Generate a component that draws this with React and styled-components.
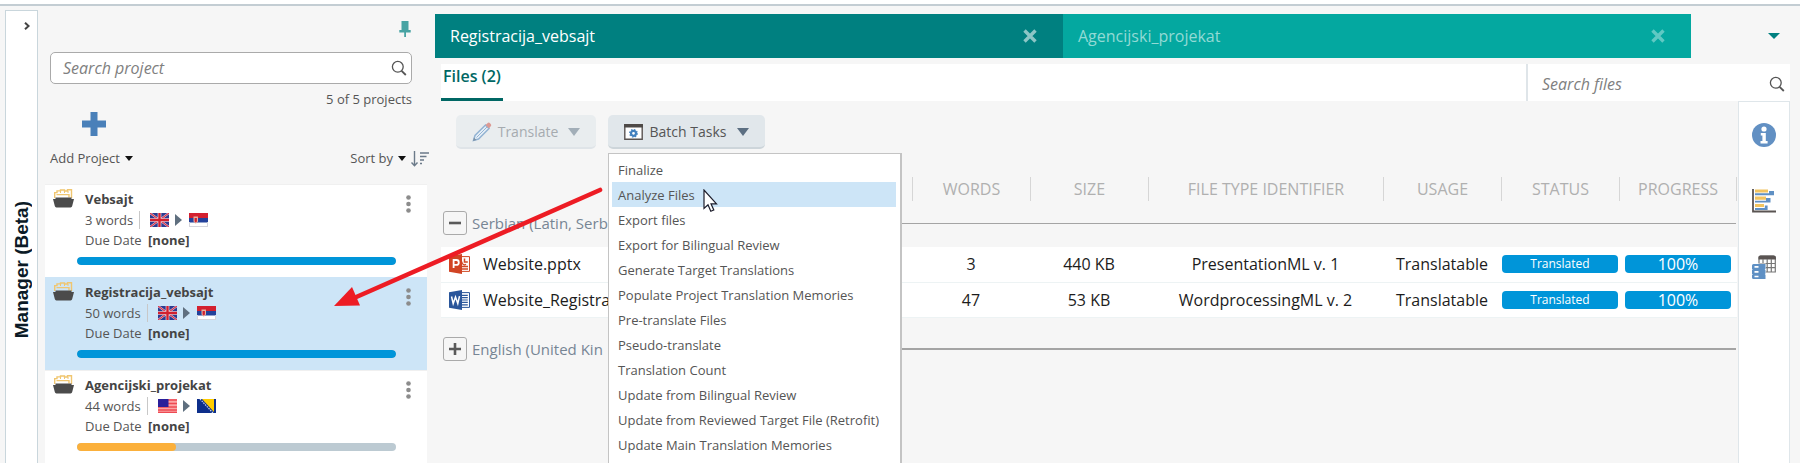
import React from "react";
import styled, { createGlobalStyle } from "styled-components";

const GlobalStyle = createGlobalStyle`
  *, *::before, *::after { box-sizing: border-box; }
  body { margin: 0; background: #f6f6f6; }
  body, button, input { font-family: "Open Sans", "Noto Sans", sans-serif; }
  button { margin: 0; padding: 0; border: 0; background: none; color: inherit; cursor: pointer; }
  svg { display: block; flex: none; }
`;

const Page = styled.div`
  position: relative;
  display: flex;
  flex-direction: column;
  min-height: 100vh;
  overflow: hidden;
  color: #555;
`;
const TopStrip = styled.div`
  height: 6px;
  background: #fff;
  border-bottom: 2px solid #c3cdd3;
`;
const Workspace = styled.div`
  flex: 1;
  display: flex;
`;

/* Collapsed side rail */
const SideRail = styled.aside`
  width: 33px;
  flex: none;
  margin: 4px 6px 0 5px;
  background: #fff;
  border: 1px solid #c9d6dc;
  border-bottom: 0;
`;
const ExpandButton = styled.button`
  display: flex;
  justify-content: flex-end;
  width: 100%;
  padding: 11px 7px 11px 0;
`;
const RailLabel = styled.div`
  margin: 160px auto 0;
  writing-mode: vertical-rl;
  transform: rotate(180deg);
  font: bold 19px/31px "Liberation Sans", sans-serif;
  color: #0b1a26;
`;

/* Projects panel */
const ProjectsPanel = styled.section`
  width: 385px;
  flex: none;
  display: flex;
  flex-direction: column;
  padding-left: 1px;
`;
const PanelTop = styled.div`
  display: flex;
  flex-direction: column;
  height: 178px;
  padding: 14px 0 0 5px;
`;
const PinButton = styled.button`
  align-self: flex-end;
  margin-right: 18px;
`;
const SearchBox = styled.label`
  display: flex;
  align-items: center;
  height: 32px;
  margin: 14px 17px 0 0;
  padding: 0 4px 0 12px;
  background: #fff;
  border: 1px solid #aaa;
  border-radius: 5px;
`;
const SearchInput = styled.input`
  flex: 1;
  min-width: 0;
  padding: 0;
  border: 0;
  outline: 0;
  background: none;
  font-size: 16px;
  font-style: italic;
  color: #555;
  &::placeholder { color: #808080; opacity: 1; }
`;
const ProjectCount = styled.div`
  margin: 5px 17px 0 0;
  text-align: right;
  font-size: 13px;
  line-height: 20px;
`;
const PanelActions = styled.div`
  display: flex;
  justify-content: space-between;
  align-items: flex-end;
  margin-top: 3px;
`;
const AddButton = styled.button`
  display: flex;
  flex-direction: column;
  gap: 12px;
  font-size: 13px;
  line-height: 20px;
  & > svg { margin-left: 32px; }
`;
const SortButton = styled.button`
  font-size: 13px;
  line-height: 20px;
`;
const LabelLine = styled.span`
  display: flex;
  align-items: center;
  gap: 5px;
`;
const ProjectList = styled.ul`
  flex: 1;
  margin: 0 2px 0 0;
  padding: 0;
  list-style: none;
  background: #fff;
`;
const Card = styled.li`
  display: grid;
  grid-template-columns: 22px 1fr 6px;
  grid-template-rows: 68px 8px;
  column-gap: 10px;
  align-content: start;
  height: 93px;
  padding: 4px 15px 0 8px;
  border-top: 1px solid ${(p) => (p.$selected ? "#cde5f7" : "#f0f0f0")};
  background: ${(p) => (p.$selected ? "#cde5f7" : "#fff")};
`;
const CardInfo = styled.div`
  font-size: 13px;
  line-height: 20px;
`;
const CardTitle = styled.div`
  font-weight: bold;
  color: #444;
`;
const WordsRow = styled.div`
  display: flex;
  align-items: center;
  height: 21px;
`;
const WordCount = styled.span`
  padding-right: 6px;
  margin-right: 10px;
  line-height: 18px;
  border-right: 1px solid #c8c8c8;
`;
const Languages = styled.span`
  display: flex;
  align-items: center;
  gap: 6px;
`;
const DueValue = styled.b`
  margin-left: 3px;
  color: #444;
`;
const MoreButton = styled.button`
  align-self: start;
  padding-top: 6px;
`;
const CardBar = styled.div`
  grid-column: 1 / -1;
  height: 8px;
  margin: 0 16px 0 24px;
  border-radius: 4px;
  background: #bccad2;
  overflow: hidden;
`;
const CardBarFill = styled.div`
  height: 100%;
  border-radius: 4px;
  background: ${(p) => (p.$done ? "#0095d9" : "#fbb03b")};
`;

/* Main area */
const Main = styled.main`
  flex: 1;
  min-width: 0;
  display: flex;
  flex-direction: column;
  padding: 8px 0 0 6px;
`;
const TabBar = styled.div`
  display: flex;
`;
const Tab = styled.div`
  flex: 1;
  display: flex;
  align-items: center;
  justify-content: space-between;
  height: 44px;
  padding: 0 26px 0 15px;
  background: ${(p) => (p.$active ? "#008080" : "#04a8a0")};
  color: ${(p) => (p.$active ? "#fff" : "#92dad5")};
`;
const TabTitle = styled.button`
  font-size: 16px;
  line-height: 24px;
`;
const CloseButton = styled.button`
  color: ${(p) => (p.$active ? "#8cc6c6" : "#5fc9c3")};
`;
const TabOverflow = styled.div`
  display: flex;
  align-items: center;
  justify-content: flex-end;
  width: 109px;
  padding-right: 20px;
`;
const Content = styled.div`
  flex: 1;
  display: flex;
  flex-direction: column;
  margin: 6px 10px 0 6px;
`;
const FilesBar = styled.div`
  display: flex;
  justify-content: space-between;
  height: 37px;
  background: #fff;
`;
const FilesTab = styled.button`
  display: flex;
  padding: 0 2px;
  border-bottom: 3px solid #006764;
  font-size: 16px;
  line-height: 24px;
  font-weight: 600;
  color: #006764;
`;
const FileSearch = styled.label`
  display: flex;
  align-items: center;
  width: 264px;
  padding: 2px 5px 0 14px;
  border-left: 2px solid #dfe5e9;
`;
const Body = styled.div`
  flex: 1;
  display: flex;
`;
const FilesView = styled.div`
  flex: 1;
  min-width: 0;
  padding: 14px 1px 0 0;
`;
const ToolRail = styled.nav`
  display: flex;
  flex-direction: column;
  align-items: center;
  gap: 42px;
  width: 52px;
  padding-top: 21px;
  background: #fff;
  border: 1px solid #dfe6ea;
  border-bottom: 0;
`;
const Actions = styled.div`
  display: flex;
  gap: 12px;
  margin-left: 15px;
`;
const ActionButton = styled.button`
  display: flex;
  align-items: center;
  justify-content: center;
  gap: ${(p) => (p.$wide ? 7 : 6)}px;
  width: ${(p) => (p.$wide ? 157 : 140)}px;
  height: 34px;
  padding-top: 2px;
  border-radius: 5px;
  border-bottom: 2px solid #cdd5da;
  background: #e1e7eb;
  font-size: 14px;
  line-height: 20px;
  color: #555;
  & > svg:last-child { margin-left: 4px; }
  &:disabled {
    background: #e9edef;
    border-color: #dfe4e8;
    color: #a6abaf;
  }
`;
const MenuAnchor = styled.div`
  position: relative;
`;
const Menu = styled.ul`
  position: absolute;
  z-index: 2;
  top: 38px;
  left: 0;
  width: 294px;
  margin: 0;
  padding: 3px 4px 16px 3px;
  list-style: none;
  background: #fff;
  border: 2px solid #c4c4c4;
  border-width: 1px 2px 1px 1px;
`;
const MenuItem = styled.button`
  display: block;
  width: 100%;
  height: 25px;
  padding-left: 6px;
  text-align: left;
  font-size: 13px;
  line-height: 24px;
  white-space: nowrap;
  background: ${(p) => (p.$hover ? "#cde5f7" : "transparent")};
`;
const Cursor = styled.svg`
  position: absolute;
  left: 94px;
  top: 35px;
`;

const FilesTable = styled.table`
  width: 100%;
  margin-top: 20px;
  table-layout: fixed;
  border-collapse: collapse;
`;
const HeadCell = styled.th`
  height: 40px;
  padding: 0;
  font-size: 16px;
  font-weight: normal;
  color: #b0b0b0;
`;
const HeadLabel = styled.span`
  display: block;
  line-height: 24px;
  border-left: 1px solid #d6d6d6;
  border-right: ${(p) => (p.$last ? "1px solid #d6d6d6" : "0")};
`;
const GroupCell = styled.th`
  padding: ${(p) => (p.$later ? "19px 1px 11px 2px" : "2px 1px 12px 2px")};
  font-size: 15px;
  font-weight: normal;
  color: #778594;
`;
const GroupLine = styled.div`
  display: flex;
  align-items: center;
  gap: 5px;
  line-height: 24px;
  white-space: nowrap;
`;
const Toggle = styled.button`
  display: flex;
  align-items: center;
  justify-content: center;
  width: 24px;
  height: 24px;
  border: 1px solid #aaa;
  border-radius: 3px;
`;
const Rule = styled.span`
  flex: 1;
  height: ${(p) => (p.$bold ? 2 : 1)}px;
  background: #a4a4a4;
`;
const FileRow = styled.tr`
  height: 35px;
  background: #fff;
  border-bottom: 1px solid #edf3f4;
`;
const FileCell = styled.td`
  padding: 0;
  text-align: center;
  font-size: 16px;
  line-height: 24px;
  color: #1c1c1c;
`;
const FileName = styled.span`
  display: flex;
  align-items: center;
  gap: 12px;
  padding-left: 8px;
`;
const Badge = styled.span`
  display: block;
  height: 18px;
  margin: 0 ${(p) => (p.$inset ? 6 : 1)}px;
  border-radius: 4px;
  background: #0095d9;
  color: #fff;
  font-size: ${(p) => (p.$inset ? 16 : 12)}px;
  line-height: 18px;
  font-weight: ${(p) => (p.$inset ? 400 : 500)};
`;
const CalloutArrow = styled.svg`
  position: absolute;
  z-index: 3;
  left: 330px;
  top: 184px;
  pointer-events: none;
`;

const Caret = ({ w = 8, h = 5, color = "#111" }) => (
  <svg width={w} height={h} viewBox="0 0 12 6" preserveAspectRatio="none" aria-hidden="true">
    <path d="M0 0h12L6 6z" fill={color} />
  </svg>
);
const SearchIcon = () => (
  <svg width="16" height="16" viewBox="0 0 16 16" fill="none" stroke="#555" aria-hidden="true">
    <circle cx="6.8" cy="6.8" r="5.4" strokeWidth="1.3" />
    <path d="M10.6 10.8l4.2 4.2" strokeWidth="1.8" />
  </svg>
);
const CloseIcon = () => (
  <svg width="14" height="14" viewBox="0 0 14 14" stroke="currentColor" strokeWidth="3.4" aria-hidden="true">
    <path d="M1.5 1.5l11 11M12.5 1.5l-11 11" />
  </svg>
);
const FolderIcon = () => (
  <svg width="21" height="19" viewBox="0 0 21 19" aria-hidden="true">
    <path d="M1.700 9V3.600h2.300V1.900h3.500V1h4v1h3V.800h4V9" fill="none" stroke="#f0c670" strokeWidth="1.400" />
    <path d="M3.500 5.600h12.500v3" fill="none" stroke="#f0c670" strokeWidth="1.400" />
    <path d="M7.500 2v2M11.500 2v2M15 2v2" stroke="#f0c670" />
    <path d="M0 10h2.500V8.500h16V10H21l-1.800 7.100q-.3 1.400-1.600 1.400H3.400q-1.300 0-1.600-1.400z" fill="#4b4b4b" />
  </svg>
);
const DotsIcon = () => (
  <svg width="5" height="18" viewBox="0 0 5 18" fill="#8c8c8c" aria-hidden="true">
    <circle cx="2.500" cy="2.500" r="2.300" /><circle cx="2.500" cy="9" r="2.300" /><circle cx="2.500" cy="15.500" r="2.300" />
  </svg>
);
const FLAGS = {
  uk: (
    <>
      <path d="M0 0h19v14H0z" fill="#2c3a90" />
      <path d="M0 0l19 14M19 0L0 14" stroke="#e9e4ee" strokeWidth="2" />
      <path d="M0 0l19 14M19 0L0 14" stroke="#d8324a" strokeWidth="1.200" />
      <path d="M9.500 0v14M0 7h19" stroke="#f1eef4" strokeWidth="3.600" />
      <path d="M9.500 0v14M0 7h19" stroke="#d3202f" strokeWidth="2.400" />
    </>
  ),
  rs: (
    <>
      <path d="M0 0h19v14H0z" fill="#fff" />
      <path d="M0 0h19v5H0z" fill="#d3202f" />
      <path d="M0 5h19v4.500H0z" fill="#23429b" />
      <path d="M4.500 3.500h4.500v5l-2.200 2.300-2.300-2.300z" fill="#e8b0a0" />
      <path d="M5.600 5h2.300v3.500l-1.100 1-1.200-1z" fill="#d3202f" />
      <path d="M0 13.500h19M.5 9v5M18.500 9v5" stroke="#d5d5dc" />
    </>
  ),
  us: (
    <>
      <path d="M0 0h19v14H0z" fill="#fba5a5" />
      <path d="M0 1h19M0 4.500h19M0 8h19M0 11h19M0 13.500h19" stroke="#ee4a53" strokeWidth="1.700" />
      <path d="M0 0h10.500v8H0z" fill="#2a1f9a" />
    </>
  ),
  ba: (
    <>
      <path d="M0 0h19v14H0z" fill="#0d2f8b" />
      <path d="M5 0h12v13z" fill="#fc0" />
      <path d="M3 0l13 14" stroke="#c9d4ee" strokeWidth="1.200" strokeDasharray="1.500 1" />
    </>
  ),
};
const Flag = ({ code }) => (
  <svg width="19" height="14" viewBox="0 0 19 14" role="img" aria-label={code}>{FLAGS[code]}</svg>
);
const PinIcon = () => (
  <svg width="12" height="18" viewBox="0 0 12 18" fill="#48a3a3" aria-hidden="true">
    <path d="M2.500 1h7v9h2.200v2.500H7v4.500H5.200v-4.500H.3V10h2.200z" />
  </svg>
);
const SortIcon = () => (
  <svg width="18" height="17" viewBox="0 0 18 17" fill="none" stroke="#6b7a89" strokeWidth="1.400" aria-hidden="true">
    <path d="M3.500 1v15M.5 12.500l3 3.300 3-3.300M9 3h9M9 6.500h6.500M9 10h4M9 13.500h2" />
  </svg>
);
const PencilIcon = () => (
  <svg width="20" height="20" viewBox="0 0 20 20" aria-hidden="true">
    <path d="M1.500 18.500l1.500-5L13.500 3l3.500 3.500L6.500 17z" fill="#e6eff7" stroke="#93b3d3" strokeWidth="1.500" />
    <path d="M4.500 15.500L15.200 4.800" stroke="#93b3d3" />
    <path d="M1 19l1-3.500L4.500 18z" fill="#7c93a8" />
    <path d="M13.500 3L16 .8q1-.6 2 .4l.9 1q.8 1 0 1.800L17 6.500z" fill="#dc9a94" />
  </svg>
);
const BatchIcon = () => (
  <svg width="19" height="16" viewBox="0 0 19 16" aria-hidden="true">
    <path d="M.8.800h17.400v14.400H.800z" fill="#fff" stroke="#5a5452" strokeWidth="1.400" />
    <path d="M.1.100h18.800v3.400H.100z" fill="#4d4947" />
    <circle cx="9.500" cy="9.300" r="2.500" fill="none" stroke="#4280be" strokeWidth="2.200" />
    <circle cx="9.500" cy="9.300" r="3.800" fill="none" stroke="#4280be" strokeWidth="1.200" strokeDasharray="1.500 1.480" />
  </svg>
);
const PowerPointIcon = () => (
  <svg width="22" height="20" viewBox="0 0 22 20" aria-hidden="true">
    <path d="M11 2.600h9.500v14.800H11z" fill="#fff" stroke="#d04a26" />
    <path d="M15.500 4.500v3.600h3.300" fill="none" stroke="#d04a26" strokeWidth="1.500" />
    <path d="M13 7.500a2.600 2.600 0 0 0 4 2.800M13 12.500h6M13 15h6" fill="none" stroke="#d04a26" strokeWidth="1.300" />
    <path d="M0 2.300L13 0v20L0 17.700z" fill="#d14424" />
    <path d="M4.600 14V6h2.900q2.300 0 2.300 2.400t-2.400 2.500H4.600" fill="none" stroke="#fff" strokeWidth="1.800" />
  </svg>
);
const WordIcon = () => (
  <svg width="22" height="20" viewBox="0 0 22 20" aria-hidden="true">
    <path d="M11 2.600h9.500v14.800H11z" fill="#fff" stroke="#2b579a" />
    <path d="M12.500 5.300h6.300M12.500 7.700h6.300M12.500 10h6.300M12.500 12.400h6.300M12.500 14.800h6.300" stroke="#2b579a" strokeWidth="1.200" />
    <path d="M0 2.300L13 0v20L0 17.700z" fill="#2a569b" />
    <path d="M2.500 6.500l1.700 7 2.300-6.500 2.300 6.500 1.700-7.300" fill="none" stroke="#fff" strokeWidth="1.500" />
  </svg>
);
const InfoIcon = () => (
  <svg width="24" height="24" viewBox="0 0 24 24" aria-hidden="true">
    <circle cx="12" cy="12" r="12" fill="#6290c3" />
    <circle cx="12" cy="6" r="2.600" fill="#fff" />
    <path d="M8.800 10h5v8h1.800v2.500H8.500V18h1.900v-5.500H8.800z" fill="#fff" />
  </svg>
);
const ChartIcon = () => (
  <svg width="24" height="24" viewBox="0 0 24 24" aria-hidden="true">
    <path d="M3 .500h13v3H3zM3 7.500h11v3.300H3zM3 15h9v3H3z" fill="#f2c460" />
    <path d="M17 2h5v4.200H3V4.300h14zM14 9h4.500v4.500H3v-1.800h11zM12.800 16.500h2.800V21H3v-2h9.800z" fill="#5f90c4" />
    <path d="M1 0v22.500h23" fill="none" stroke="#5a5452" strokeWidth="1.800" />
  </svg>
);
const DataIcon = () => (
  <svg width="24" height="24" viewBox="0 0 24 24" aria-hidden="true">
    <path d="M7 2.500Q7 1 8.500 1h13Q23.300 1 23.300 2.500V17H7z" fill="#fff" stroke="#777" strokeWidth="1.200" />
    <path d="M6.500 4.500V2Q6.500.500 8.500.500h13q2.400 0 2.400 2v2z" fill="#5a5452" />
    <path d="M7 8.500h16M7 12.700h16M11 4v13M15.200 4v13M19.300 4v13" stroke="#777" strokeWidth="1.200" />
    <path d="M0 8.500h13.800v15.500H1.500Q0 24 0 22.500z" fill="#fff" />
    <path d="M1.500 9h12v5l-.8.500.8.700v3.300l-.8.500.8.700V24h-12Q0 24 0 22.500V20l.8-.600L0 18.800V15l.8-.500L0 14v-3.500Q0 9 1.500 9z" fill="#5f90c4" />
    <path d="M2.500 11.800h4M2.500 16.800h4M2.500 21.500h4" stroke="#fff" strokeWidth="1.700" />
  </svg>
);

const PROJECTS = [
  { name: "Vebsajt", words: 3, from: "uk", to: "rs", progress: 100 },
  { name: "Registracija_vebsajt", words: 50, from: "uk", to: "rs", progress: 100, selected: true },
  { name: "Agencijski_projekat", words: 44, from: "us", to: "ba", progress: 31 },
];
const TASKS = [
  "Finalize",
  "Analyze Files",
  "Export files",
  "Export for Bilingual Review",
  "Generate Target Translations",
  "Populate Project Translation Memories",
  "Pre-translate Files",
  "Pseudo-translate",
  "Translation Count",
  "Update from Bilingual Review",
  "Update from Reviewed Target File (Retrofit)",
  "Update Main Translation Memories",
];
const COLUMNS = [
  { label: "WORDS", width: 118 },
  { label: "SIZE", width: 118 },
  { label: "FILE TYPE IDENTIFIER", width: 235 },
  { label: "USAGE", width: 118 },
  { label: "STATUS", width: 118 },
  { label: "PROGRESS", width: 118 },
];
const FILES = [
  { Icon: PowerPointIcon, name: "Website.pptx", words: 3, size: "440 KB", type: "PresentationML v. 1" },
  { Icon: WordIcon, name: "Website_Registra", words: 47, size: "53 KB", type: "WordprocessingML v. 2" },
];

function ProjectCard({ project }) {
  return (
    <Card $selected={project.selected}>
      <FolderIcon />
      <CardInfo>
        <CardTitle>{project.name}</CardTitle>
        <WordsRow>
          <WordCount>{project.words} words</WordCount>
          <Languages>
            <Flag code={project.from} />
            <svg width="8" height="12" viewBox="0 0 8 12" aria-hidden="true"><path d="M0 0l7 6-7 6z" fill="#5f6f7f" /></svg>
            <Flag code={project.to} />
          </Languages>
        </WordsRow>
        <div>Due Date <DueValue>[none]</DueValue></div>
      </CardInfo>
      <MoreButton aria-label={`Options for ${project.name}`}><DotsIcon /></MoreButton>
      <CardBar>
        <CardBarFill $done={project.progress === 100} style={{ width: `${project.progress}%` }} />
      </CardBar>
    </Card>
  );
}

function GroupRow({ label, open, later }) {
  return (
    <tr>
      <GroupCell colSpan={7} $later={later} scope="rowgroup">
        <GroupLine>
          <Toggle aria-expanded={open} aria-label={label}>
            <svg width="12" height="12" viewBox="0 0 12 12" stroke="#5a5a5a" strokeWidth="2.600" aria-hidden="true">
              <path d={open ? "M0 6h12" : "M0 6h12M6 0v12"} />
            </svg>
          </Toggle>
          <span>{label}</span>
          <Rule $bold={later} />
        </GroupLine>
      </GroupCell>
    </tr>
  );
}

export default function App() {
  return (
    <Page>
      <GlobalStyle />
      <TopStrip />
      <Workspace>
        <SideRail>
          <ExpandButton aria-label="Expand panel">
            <svg width="6" height="8" viewBox="0 0 6 8" fill="none" stroke="#444" strokeWidth="2" aria-hidden="true">
              <path d="M1 .700L4.600 4 1 7.300" />
            </svg>
          </ExpandButton>
          <RailLabel>Manager (Beta)</RailLabel>
        </SideRail>

        <ProjectsPanel>
          <PanelTop>
            <PinButton aria-label="Pin panel"><PinIcon /></PinButton>
            <SearchBox>
              <SearchInput type="text" placeholder="Search project" aria-label="Search project" />
              <SearchIcon />
            </SearchBox>
            <ProjectCount>5 of 5 projects</ProjectCount>
            <PanelActions>
              <AddButton>
                <svg width="24" height="24" viewBox="0 0 24 24" fill="#4a80b9" aria-hidden="true">
                  <path d="M8.500 0h7v8.500H24v7h-8.500V24h-7v-8.500H0v-7h8.500z" />
                </svg>
                <LabelLine>Add Project <Caret /></LabelLine>
              </AddButton>
              <SortButton>
                <LabelLine>Sort by <Caret /><SortIcon /></LabelLine>
              </SortButton>
            </PanelActions>
          </PanelTop>
          <ProjectList>
            {PROJECTS.map((p) => <ProjectCard key={p.name} project={p} />)}
          </ProjectList>
        </ProjectsPanel>

        <Main>
          <TabBar>
            <Tab $active>
              <TabTitle>Registracija_vebsajt</TabTitle>
              <CloseButton $active aria-label="Close Registracija_vebsajt"><CloseIcon /></CloseButton>
            </Tab>
            <Tab>
              <TabTitle>Agencijski_projekat</TabTitle>
              <CloseButton aria-label="Close Agencijski_projekat"><CloseIcon /></CloseButton>
            </Tab>
            <TabOverflow>
              <button aria-label="All tabs"><Caret w={12} h={6} color="#008080" /></button>
            </TabOverflow>
          </TabBar>
          <Content>
            <FilesBar>
              <FilesTab>Files (2)</FilesTab>
              <FileSearch>
                <SearchInput type="text" placeholder="Search files" aria-label="Search files" />
                <SearchIcon />
              </FileSearch>
            </FilesBar>
            <Body>
              <FilesView>
                <Actions>
                  <ActionButton disabled>
                    <PencilIcon />Translate<Caret w={12} h={8} color="#a2aeb8" />
                  </ActionButton>
                  <MenuAnchor>
                    <ActionButton $wide aria-haspopup="menu" aria-expanded="true">
                      <BatchIcon />Batch Tasks<Caret w={12} h={8} color="#5c6f82" />
                    </ActionButton>
                    <Menu>
                      {TASKS.map((task) => (
                        <li key={task}>
                          <MenuItem $hover={task === "Analyze Files"}>{task}</MenuItem>
                        </li>
                      ))}
                      <Cursor width="15" height="24" viewBox="0 0 15 24" aria-hidden="true">
                        <path d="M1 1v18.500l4-3.700 2.800 6.500 3-1.300L8 14.800h5.500z" fill="#fff" stroke="#1d1d2b" strokeWidth="1.200" />
                      </Cursor>
                    </Menu>
                  </MenuAnchor>
                </Actions>
                <FilesTable>
                  <colgroup>
                    <col />
                    {COLUMNS.map((c) => <col key={c.label} width={c.width} />)}
                  </colgroup>
                  <thead>
                    <tr>
                      <HeadCell scope="col" aria-label="Name" />
                      {COLUMNS.map((c, i) => (
                        <HeadCell key={c.label} scope="col">
                          <HeadLabel $last={i === COLUMNS.length - 1}>{c.label}</HeadLabel>
                        </HeadCell>
                      ))}
                    </tr>
                  </thead>
                  <tbody>
                    <GroupRow label="Serbian (Latin, Serb" open />
                    {FILES.map(({ Icon, ...file }) => (
                      <FileRow key={file.name}>
                        <FileCell>
                          <FileName><Icon />{file.name}</FileName>
                        </FileCell>
                        <FileCell>{file.words}</FileCell>
                        <FileCell>{file.size}</FileCell>
                        <FileCell>{file.type}</FileCell>
                        <FileCell>Translatable</FileCell>
                        <FileCell><Badge>Translated</Badge></FileCell>
                        <FileCell><Badge $inset>100%</Badge></FileCell>
                      </FileRow>
                    ))}
                  </tbody>
                  <tbody>
                    <GroupRow label="English (United Kin" open={false} later />
                  </tbody>
                </FilesTable>
              </FilesView>
              <ToolRail>
                <button aria-label="Project details"><InfoIcon /></button>
                <button aria-label="Analysis statistics"><ChartIcon /></button>
                <button aria-label="Translation memories"><DataIcon /></button>
              </ToolRail>
            </Body>
          </Content>
        </Main>
      </Workspace>
      <CalloutArrow width="275" height="128" viewBox="0 0 275 128" aria-hidden="true">
        <path d="M270 6L24 114" stroke="#ed1c24" strokeWidth="4.600" strokeLinecap="round" />
        <path d="M4 122l18-19 8 18.500z" fill="#ed1c24" />
      </CalloutArrow>
    </Page>
  );
}
